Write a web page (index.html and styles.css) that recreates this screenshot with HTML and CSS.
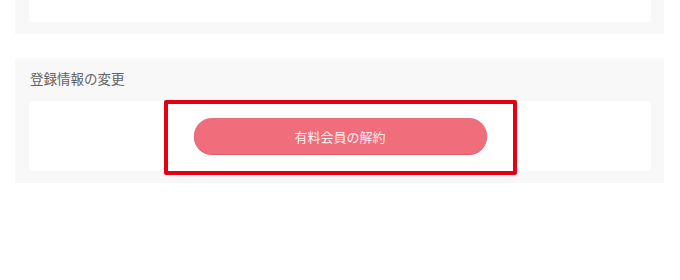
FILE: index.html
```html
<!DOCTYPE html>
<html lang="ja">
<head>
  <meta charset="UTF-8">
  <meta name="viewport" content="width=device-width, initial-scale=1.0">
  <title>登録情報の変更</title>
  <link rel="stylesheet" href="styles.css">
</head>
<body>
  <div class="page">
    <section class="panel panel-top">
      <div class="panel-body panel-body-top"></div>
    </section>
    <section class="panel">
      <h2 class="panel-title">登録情報の変更</h2>
      <div class="panel-body">
        <button type="button" class="btn-cancel">有料会員の解約</button>
        <div class="highlight"></div>
      </div>
    </section>
  </div>
</body>
</html>
```

FILE: styles.css
```css
body {
  margin: 0;
  background-color: #ffffff;
  font-family: "Noto Sans CJK JP", "Noto Sans", sans-serif;
}
.page {
  width: 649px;
  margin-left: 15px;
}
.panel {
  background-color: #f8f8f8;
  padding: 0 13px 12px 14px;
}
.panel-top {
  margin-bottom: 24px;
}
.panel-title {
  margin: 0 0 13px 1px;
  padding-top: 10px;
  font-size: 13.5px;
  font-weight: normal;
  line-height: 20px;
  color: #626262;
}
.panel-body {
  position: relative;
  background-color: #ffffff;
  height: 70px;
  display: flex;
  justify-content: center;
  align-items: center;
}
.panel-body-top {
  height: 22px;
}
.btn-cancel {
  width: 293px;
  height: 36px;
  border: none;
  border-radius: 18px;
  background-color: #f06d7b;
  box-shadow: 0 1px 0 #d85e6b;
  color: #fdf0f1;
  font-family: inherit;
  font-size: 13px;
  cursor: pointer;
}
.highlight {
  position: absolute;
  left: 135px;
  top: -1px;
  width: 345px;
  height: 67px;
  border: 4px solid #e60012;
  border-radius: 2px;
}
```
